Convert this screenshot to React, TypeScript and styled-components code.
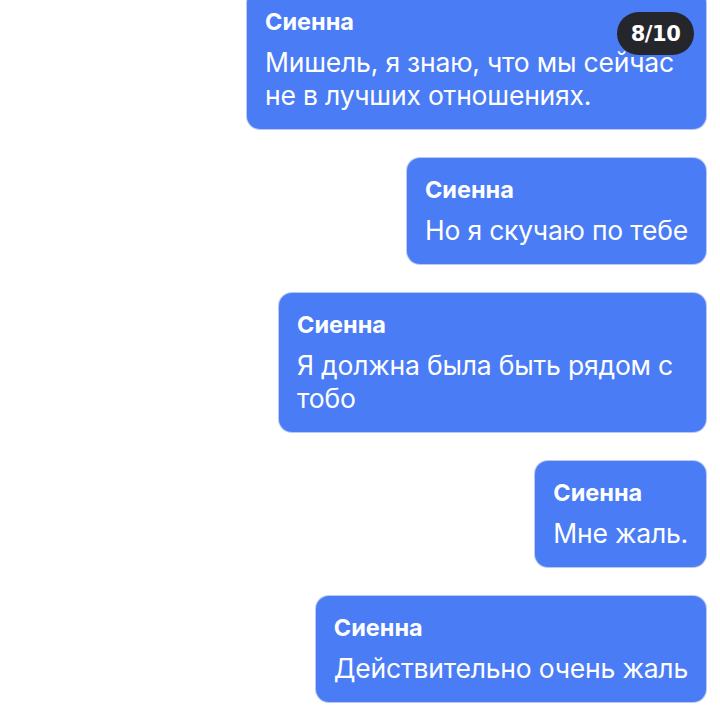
import React from "react";
import styled, { createGlobalStyle } from "styled-components";

const GlobalStyle = createGlobalStyle`
  html, body {
    margin: 0;
    padding: 0;
    background: #ffffff;
    overflow: hidden;
  }
  body {
    font-family: Inter, "Liberation Sans", sans-serif;
  }
`;

const Screen = styled.div`
  position: relative;
  width: 720px;
  height: 712px;
  overflow: hidden;
  background: #ffffff;
`;

const Thread = styled.div`
  display: flex;
  flex-direction: column;
  align-items: flex-end;
  gap: 29px;
  margin-top: -10px;
  padding-right: 14px;
`;

const Bubble = styled.div<{ $max?: number }>`
  width: max-content;
  max-width: ${(p) => (p.$max ? `${p.$max}px` : "none")};
  box-sizing: border-box;
  padding: 18px 18px 17px 18px;
  background: #4a7cf6;
  border-radius: 13px;
  box-shadow: 0 0 0 1px rgba(60, 100, 210, 0.35);
  color: #ffffff;
`;

const Name = styled.div`
  font-size: 23.5px;
  line-height: 28px;
  font-weight: 700;
  margin-bottom: 10px;
`;

const Text = styled.div`
  font-size: 26.5px;
  line-height: 33px;
  font-weight: 400;
  letter-spacing: -0.2px;
`;

const Counter = styled.div`
  position: absolute;
  top: 12px;
  left: 617px;
  width: 77px;
  height: 43px;
  border-radius: 22px;
  background: #24262c;
  color: #ffffff;
  display: flex;
  align-items: center;
  justify-content: center;
  font-family: "DejaVu Sans", sans-serif;
  font-size: 21px;
  font-weight: 600;
  letter-spacing: -0.5px;
`;

const messages: { max?: number; text: string }[] = [
  { max: 459, text: "Мишель, я знаю, что мы сейчас не в лучших отношениях." },
  { text: "Но я скучаю по тебе" },
  { max: 427, text: "Я должна была быть рядом с тобо" },
  { text: "Мне жаль." },
  { text: "Действительно очень жаль" },
];

export default function App() {
  return (
    <Screen>
      <GlobalStyle />
      <Thread>
        {messages.map((m) => (
          <Bubble $max={m.max} key={m.text}>
            <Name>Сиенна</Name>
            <Text>{m.text}</Text>
          </Bubble>
        ))}
      </Thread>
      <Counter>8/10</Counter>
    </Screen>
  );
}
